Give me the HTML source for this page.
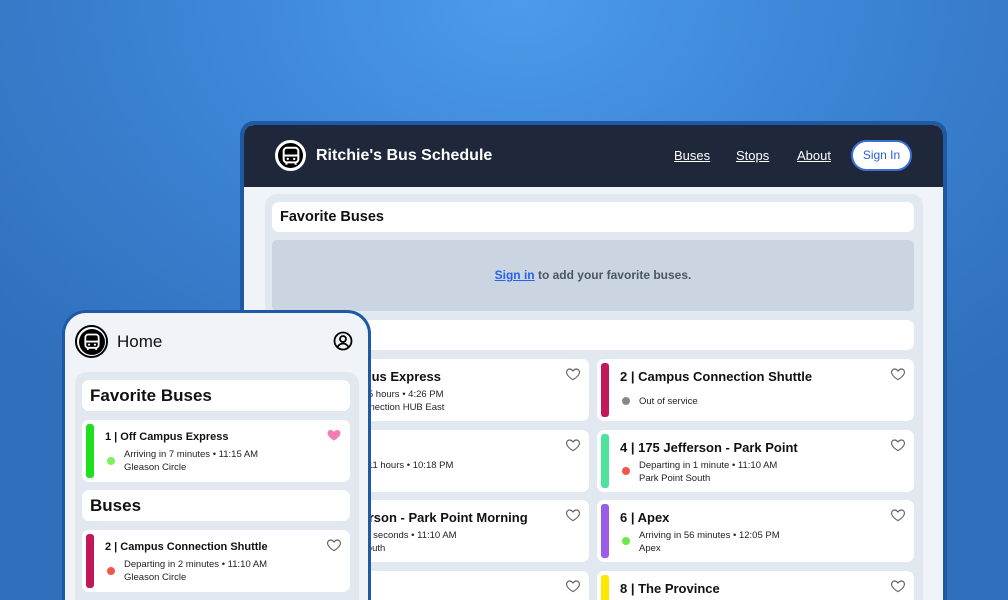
<!DOCTYPE html>
<html style="width:1008px;height:600px;overflow:hidden"><head><meta charset="utf-8"><style>
*{box-sizing:border-box;margin:0;padding:0}
body{width:1008px;height:600px;overflow:hidden;position:relative;font-family:"Liberation Sans",sans-serif;background:radial-gradient(ellipse 700px 500px at 520px 0px,#4c9bea 0%,#3d85d6 45%,#2f6fbb 100%)}
.win{position:absolute;left:240px;top:121px;width:707px;height:520px;border:4px solid #1d5aa3;border-radius:14px;background:#f0f4f8;overflow:hidden}
.hdr{height:62px;background:#1f283b;position:relative;color:#fff}
.logo{position:absolute;border-radius:50%;background:#000;display:flex;align-items:center;justify-content:center}
.hdr .t{position:absolute;left:72px;top:22px;font-size:16px;font-weight:bold}
.nav{position:absolute;top:23px;font-size:13px;text-decoration:underline}
.sb{position:absolute;left:607px;top:15px;width:61px;height:31px;border-radius:16px;background:#fff;border:2px solid #3b6fd6;color:#2a5fd6;font-size:12px;text-align:center;line-height:27px}
.panel{position:absolute;background:#e2e8f0;border-radius:12px}
.h{position:absolute;background:#fff;border-radius:7px;font-weight:bold;color:#111}
.card{position:absolute;background:#fff;border-radius:7px;height:62px}
.bar{position:absolute;left:4px;top:4px;bottom:4px;width:8px;border-radius:3px}
.ct{position:absolute;left:23px;top:10px;font-size:13px;font-weight:bold;color:#111;white-space:nowrap}
.dot{position:absolute;left:25px;width:8px;height:8px;border-radius:50%}
.s{position:absolute;left:42px;font-size:9.5px;color:#222;line-height:13px;white-space:nowrap}
.heart{position:absolute;right:8px;top:7px}
.phone{position:absolute;left:62px;top:310px;width:309px;height:320px;border:3px solid #1d5aa3;border-radius:24px;background:#f0f4f8;overflow:hidden}
</style></head><body>
<svg width="0" height="0" style="position:absolute"><defs>
<symbol id="hrt" viewBox="0 0 24 24"><path d="M12 20.5s-7.5-4.6-9.3-9.2C1.4 7.9 3.6 4.5 7 4.5c2.1 0 3.6 1.2 5 3 1.4-1.8 2.9-3 5-3 3.4 0 5.6 3.4 4.3 6.8C19.5 15.9 12 20.5 12 20.5z"/></symbol>
<symbol id="bus" viewBox="0 0 24 24"><rect x="4" y="3" width="16" height="16" rx="3.5" fill="none" stroke="#fff" stroke-width="2.2"/><line x1="4" y1="11.5" x2="20" y2="11.5" stroke="#fff" stroke-width="2.2"/><circle cx="8.5" cy="15.2" r="1.3" fill="#fff"/><circle cx="15.5" cy="15.2" r="1.3" fill="#fff"/><line x1="7" y1="19" x2="7" y2="21.5" stroke="#fff" stroke-width="2.2"/><line x1="17" y1="19" x2="17" y2="21.5" stroke="#fff" stroke-width="2.2"/></symbol>
</defs></svg>
<div class="win">
 <div class="hdr">
  <div class="logo" style="left:31px;top:15px;width:31px;height:31px;border:3px solid #fff"><svg width="22" height="22"><use href="#bus"/></svg></div>
  <div class="t">Ritchie's Bus Schedule</div>
  <div class="nav" style="left:430px">Buses</div>
  <div class="nav" style="left:492px">Stops</div>
  <div class="nav" style="left:553px">About</div>
  <div class="sb">Sign In</div>
 </div>
 <div class="panel" style="left:21px;top:69px;width:658px;height:460px">
  <div class="h" style="left:7px;top:8px;width:642px;height:30px;font-size:14.5px;padding:7px 8px">Favorite Buses</div>
  <div style="position:absolute;left:7px;top:46px;width:642px;height:71px;background:#cbd5e1;border-radius:5px;text-align:center;line-height:71px;font-size:12px;font-weight:bold;color:#4a5568"><span style="color:#2563eb;text-decoration:underline">Sign in</span> to add your favorite buses.</div>
  <div class="h" style="left:7px;top:126px;width:642px;height:30px"></div>
  <div class="card" style="left:7px;top:165px;width:317px"><div class="bar" style="background:#1ee01e"></div><div class="ct">1 | Off Campus Express</div><div class="s" style="top:29px">Departing in 5 hours • 4:26 PM<br>Campus Connection HUB East</div><svg class="heart" width="16" height="16"><use href="#hrt" fill="none" stroke="#666" stroke-width="1.7"/></svg></div>
  <div class="card" style="left:332px;top:165px;width:317px"><div class="bar" style="background:#c2185b"></div><div class="ct">2 | Campus Connection Shuttle</div><div class="dot" style="top:38px;background:#888"></div><div class="s" style="top:36px">Out of service</div><svg class="heart" width="16" height="16"><use href="#hrt" fill="none" stroke="#666" stroke-width="1.7"/></svg></div>
  <div class="card" style="left:7px;top:236px;width:317px"><div class="ct">3 | Jefferson</div><div class="s" style="top:29px">Departing in 11 hours • 10:18 PM</div><svg class="heart" width="16" height="16"><use href="#hrt" fill="none" stroke="#666" stroke-width="1.7"/></svg></div>
  <div class="card" style="left:332px;top:236px;width:317px"><div class="bar" style="background:#4ee29a"></div><div class="ct">4 | 175 Jefferson - Park Point</div><div class="dot" style="top:37px;background:#f2554c"></div><div class="s" style="top:29px">Departing in 1 minute • 11:10 AM<br>Park Point South</div><svg class="heart" width="16" height="16"><use href="#hrt" fill="none" stroke="#666" stroke-width="1.7"/></svg></div>
  <div class="card" style="left:7px;top:306px;width:317px"><div class="ct">5 | 175 Jefferson - Park Point Morning</div><div class="s" style="top:29px">Leaving in 54 seconds • 11:10 AM<br>Park Point South</div><svg class="heart" width="16" height="16"><use href="#hrt" fill="none" stroke="#666" stroke-width="1.7"/></svg></div>
  <div class="card" style="left:332px;top:306px;width:317px"><div class="bar" style="background:#9b5de5"></div><div class="ct">6 | Apex</div><div class="dot" style="top:37px;background:#6ee94a"></div><div class="s" style="top:29px">Arriving in 56 minutes • 12:05 PM<br>Apex</div><svg class="heart" width="16" height="16"><use href="#hrt" fill="none" stroke="#666" stroke-width="1.7"/></svg></div>
  <div class="card" style="left:7px;top:377px;width:317px"><div class="ct">7 | Green</div><svg class="heart" width="16" height="16"><use href="#hrt" fill="none" stroke="#666" stroke-width="1.7"/></svg></div>
  <div class="card" style="left:332px;top:377px;width:317px"><div class="bar" style="background:#ffe600"></div><div class="ct">8 | The Province</div><svg class="heart" width="16" height="16"><use href="#hrt" fill="none" stroke="#666" stroke-width="1.7"/></svg></div>
 </div>
</div>
<div class="phone">
 <div class="logo" style="left:10px;top:12px;width:33px;height:33px;border:2.5px solid #000;background:#fff"><div style="width:26px;height:26px;border-radius:50%;background:#000;display:flex;align-items:center;justify-content:center"><svg width="20" height="20"><use href="#bus"/></svg></div></div>
 <div style="position:absolute;left:52px;top:19px;font-size:17px;color:#111">Home</div>
 <svg style="position:absolute;left:268px;top:18px" width="20" height="20" viewBox="0 0 20 20"><circle cx="10" cy="10" r="8.5" fill="none" stroke="#000" stroke-width="1.8"/><circle cx="10" cy="8" r="3" fill="none" stroke="#000" stroke-width="1.8"/><path d="M4.5 16c1.5-2.5 3.3-3.5 5.5-3.5s4 1 5.5 3.5" fill="none" stroke="#000" stroke-width="1.8"/></svg>
 <div class="panel" style="left:10px;top:59px;width:284px;height:300px">
  <div class="h" style="left:7px;top:8px;width:268px;height:31px;font-size:17px;padding:6px 8px">Favorite Buses</div>
  <div class="card" style="left:7px;top:48px;width:268px"><div class="bar" style="background:#1ee01e"></div><div class="ct" style="font-size:11px;top:11px">1 | Off Campus Express</div><div class="dot" style="top:37px;background:#7ef05a"></div><div class="s" style="top:28px;font-size:9.5px">Arriving in 7 minutes • 11:15 AM<br>Gleason Circle</div><svg class="heart" width="16" height="16"><use href="#hrt" fill="#f47db0"/></svg></div>
  <div class="h" style="left:7px;top:118px;width:268px;height:31px;font-size:17px;padding:6px 8px">Buses</div>
  <div class="card" style="left:7px;top:158px;width:268px"><div class="bar" style="background:#c2185b"></div><div class="ct" style="font-size:11px;top:11px">2 | Campus Connection Shuttle</div><div class="dot" style="top:37px;background:#f2554c"></div><div class="s" style="top:28px;font-size:9.5px">Departing in 2 minutes • 11:10 AM<br>Gleason Circle</div><svg class="heart" width="16" height="16"><use href="#hrt" fill="none" stroke="#666" stroke-width="1.7"/></svg></div>
 </div>
</div>
</body></html>
